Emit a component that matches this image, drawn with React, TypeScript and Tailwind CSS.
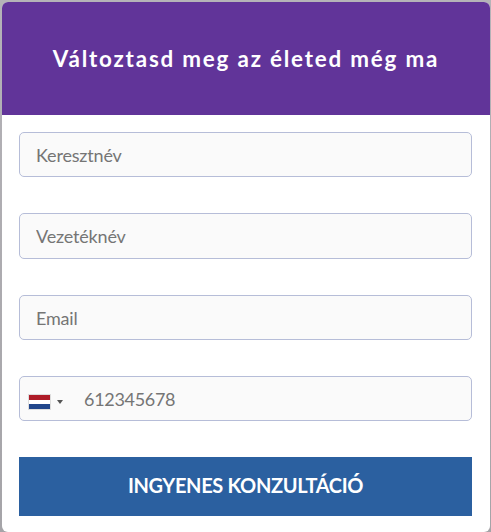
import React from "react";

interface FieldProps {
  name: string;
  type: string;
  placeholder: string;
}

const fields: FieldProps[] = [
  { name: "keresztnev", type: "text", placeholder: "Keresztnév" },
  { name: "vezeteknev", type: "text", placeholder: "Vezetéknév" },
  { name: "email", type: "email", placeholder: "Email" },
];

function Field({ name, type, placeholder }: FieldProps) {
  return (
    <input
      name={name}
      type={type}
      placeholder={placeholder}
      className="block h-[45.4px] w-full rounded-[5px] border border-[#b6bdd8] bg-[#fafafa] px-4 pt-px text-[18px] tracking-[-0.18px] text-[#333] outline-none placeholder:text-[#757575]"
    />
  );
}

function PhoneField() {
  return (
    <div className="flex h-[45.4px] w-full items-center rounded-[5px] border border-[#b6bdd8] bg-[#fafafa]">
      <button type="button" className="flex items-center gap-[6px] pt-[6px] pl-2">
        <span className="flex h-[16px] w-[23px] flex-col border border-[#ddd]">
          <span className="h-[5px] bg-[#ae1c28]"></span>
          <span className="flex-1 bg-white"></span>
          <span className="h-[5px] bg-[#21468b]"></span>
        </span>
        <span className="border-x-[3.5px] border-t-4 border-x-transparent border-t-[#555]"></span>
      </button>
      <input
        name="telefon"
        type="tel"
        placeholder="612345678"
        className="ml-[21px] h-full min-w-0 flex-1 bg-transparent pt-px text-[18px] tracking-[-0.3px] text-[#333] outline-none placeholder:text-[#757575]"
      />
    </div>
  );
}

function App() {
  return (
    <div className="flex h-[532px] w-[491px] bg-linear-to-b from-[#b5b3b8] to-[#a5a4a8] pt-[2px] pr-px pl-[2px] font-['Lato',sans-serif]">
      <div className="w-full overflow-hidden rounded-[6px] bg-white">
        <h1 className="flex h-[113px] items-center justify-center bg-[#613499] pt-px text-[22.4px] font-bold tracking-[1.8px] text-white">
          Változtasd meg az életed még ma
        </h1>
        <form className="flex flex-col gap-[35.9px] pt-[17px] pr-[18px] pl-[17px]">
          {fields.map((field) => (
            <Field key={field.name} {...field} />
          ))}
          <PhoneField />
          <button
            type="button"
            className="mt-[-0.5px] h-[59px] w-full bg-[#2b60a0] pb-[3px] text-[20px] font-bold tracking-[-0.35px] text-white"
          >
            INGYENES KONZULTÁCIÓ
          </button>
        </form>
      </div>
    </div>
  );
}

export default App;
